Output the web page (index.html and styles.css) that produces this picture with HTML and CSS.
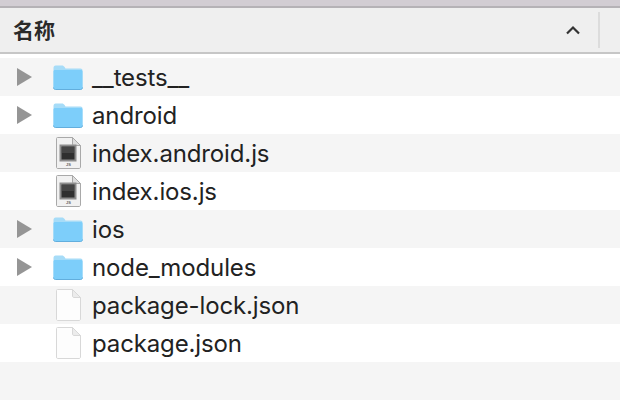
FILE: index.html
```html
<!DOCTYPE html>
<html lang="zh">
<head>
<meta charset="utf-8">
<title>名称</title>
<link rel="stylesheet" href="styles.css">
</head>
<body>
<svg class="defs" width="0" height="0" aria-hidden="true">
  <defs>
    <symbol id="folder" viewBox="0 0 30 25">
      <path d="M.5 3C.5 1.500 1.300.5 2.500.5h6.500c1.200 0 1.800.5 2.600 1.600L12.500 3.500H27.500c1.300 0 2 .8 2 2V22.500c0 1.200-.7 2-2 2H2.500c-1.200 0-2-.8-2-2z" fill="#a6dcf8"/>
      <path d="M.5 6.500C.5 5.600 1.100 5 2 5h26c.9 0 1.500.6 1.500 1.500v16c0 1.200-.7 2-2 2H2.500c-1.200 0-2-.8-2-2z" fill="#7dcefa"/>
      <path d="M.5 22.500c0 1.200.8 2 2 2h25c1.300 0 2-.8 2-2" fill="none" stroke="#62aedd" stroke-width="1"/>
    </symbol>
    <symbol id="page" viewBox="0 0 25 32">
      <path d="M1.500.5H16.500L24.500 8.500V30c0 .9-.6 1.500-1.500 1.500H1.500C.9 31.500.5 30.900.5 30V1.500C.5.900.9.500 1.500.500z" fill="#fdfdfd" stroke="#d8d8d8"/>
      <path d="M16.500.5V7c0 .9.600 1.500 1.500 1.500h6.500z" fill="#ececec" stroke="#d8d8d8"/>
    </symbol>
    <symbol id="js-page" viewBox="0 0 25 32">
      <path d="M1.500.5H16.500L24.500 8.500V30c0 .9-.6 1.500-1.500 1.500H1.500C.9 31.500.5 30.900.5 30V1.500C.5.900.9.500 1.500.500z" fill="#f1f1f1" stroke="#a9a9a9"/>
      <path d="M16.500.5V7c0 .9.600 1.500 1.500 1.500h6.500z" fill="#dedede" stroke="#a9a9a9"/>
      <rect x="4.500" y="8.500" width="15" height="15" fill="#2f2f2f" stroke="#8d8d8d" stroke-width="2"/>
      <rect x="6" y="10" width="12" height="6" fill="#454545"/>
      <text x="12.500" y="29" class="js-label">JS</text>
    </symbol>
  </defs>
</svg>
<main class="window">
  <div class="titlebar"></div>
  <header class="columns">
    <span class="column-name">名称</span>
    <svg class="sort" viewBox="0 0 16 10" width="16" height="10" aria-hidden="true"><path d="M2 8.500 8 2.500l6 6" fill="none" stroke="#333" stroke-width="2.200"/></svg>
    <span class="divider"></span>
  </header>
  <ul class="list">
    <li class="row">
      <span class="disclosure"></span>
      <svg class="icon folder"><use href="#folder"/></svg>
      <span class="name">__tests__</span>
    </li>
    <li class="row">
      <span class="disclosure"></span>
      <svg class="icon folder"><use href="#folder"/></svg>
      <span class="name">android</span>
    </li>
    <li class="row">
      <span class="no-disclosure"></span>
      <svg class="icon doc"><use href="#js-page"/></svg>
      <span class="name">index.android.js</span>
    </li>
    <li class="row">
      <span class="no-disclosure"></span>
      <svg class="icon doc"><use href="#js-page"/></svg>
      <span class="name">index.ios.js</span>
    </li>
    <li class="row">
      <span class="disclosure"></span>
      <svg class="icon folder"><use href="#folder"/></svg>
      <span class="name">ios</span>
    </li>
    <li class="row">
      <span class="disclosure"></span>
      <svg class="icon folder"><use href="#folder"/></svg>
      <span class="name">node_modules</span>
    </li>
    <li class="row">
      <span class="no-disclosure"></span>
      <svg class="icon doc"><use href="#page"/></svg>
      <span class="name">package-lock.json</span>
    </li>
    <li class="row">
      <span class="no-disclosure"></span>
      <svg class="icon doc"><use href="#page"/></svg>
      <span class="name">package.json</span>
    </li>
    <li class="row"></li>
  </ul>
</main>
</body>
</html>
```
FILE: styles.css
```css
html, body {
  margin: 0;
  padding: 0;
  background: #fff;
}
body {
  width: 620px;
  height: 406px;
  overflow: hidden;
  font-family: "Inter", "Liberation Sans", sans-serif;
  color: #222;
}
.defs {
  position: absolute;
}
.titlebar {
  height: 6px;
  background: #d2cdd3;
  border-bottom: 2px solid #b5b2b6;
}
.columns {
  height: 44px;
  display: flex;
  align-items: center;
  background: #efefef;
  border-bottom: 2px solid #c6c6c6;
  padding-left: 13px;
  margin-bottom: 4px;
}
.column-name {
  font-family: "Noto Sans CJK SC", sans-serif;
  font-size: 21px;
  line-height: 24px;
  margin-top: -2px;
  font-weight: 700;
  color: #2a2a2a;
  flex: 1;
}
.sort {
  margin-right: 17px;
}
.divider {
  width: 2px;
  height: 36px;
  background: #dcdcdc;
  margin-right: 20px;
}
.list {
  list-style: none;
  margin: 0;
  padding: 0;
}
.row {
  height: 38px;
  display: flex;
  align-items: center;
  padding-left: 17px;
}
.row:nth-child(odd) {
  background: #f5f5f5;
}
.disclosure {
  width: 0;
  height: 0;
  border-left: 15px solid #959595;
  border-top: 9px solid transparent;
  border-bottom: 9px solid transparent;
  margin-right: 21px;
}
.no-disclosure {
  width: 36px;
}
.icon {
  flex: none;
}
.folder {
  width: 30px;
  height: 25px;
  margin-right: 9px;
}
.doc {
  width: 25px;
  height: 32px;
  margin-left: 3px;
  margin-right: 11px;
}
.name {
  font-size: 24px;
  letter-spacing: -0.13px;
}
.js-label {
  font-family: "Liberation Sans", sans-serif;
  font-size: 4px;
  font-weight: 700;
  fill: #666;
  text-anchor: middle;
}
```
